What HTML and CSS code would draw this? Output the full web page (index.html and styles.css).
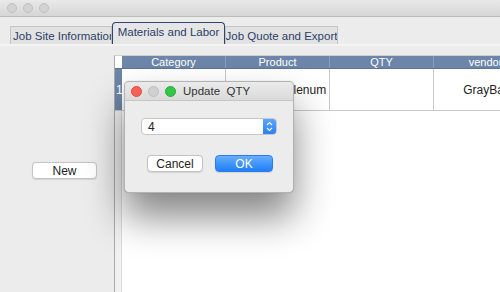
FILE: index.html
```html
<!DOCTYPE html>
<html lang="en">
<head>
  <meta charset="UTF-8" />
  <meta name="viewport" content="width=device-width, initial-scale=1.0" />
  <title>Materials and Labor</title>
  <link rel="stylesheet" href="styles.css">
</head>
<body>
  <div class="window">
    <div class="titlebar">
      <span class="light"></span>
      <span class="light"></span>
      <span class="light"></span>
    </div>

    <div class="tabs">
      <div class="tab tab-first">Job Site Information</div>
      <div class="tab active">Materials and Labor</div>
      <div class="tab">Job Quote and Export</div>
    </div>

    <div class="split">
      <div class="sidebar">
        <button class="btn">New</button>
      </div>
      <div class="pane">
        <div class="scroll">
          <table class="grid">
            <thead>
              <tr>
                <th class="corner"></th>
                <th class="col">Category</th>
                <th class="col">Product</th>
                <th class="col">QTY</th>
                <th class="col">vendor</th>
              </tr>
            </thead>
            <tbody>
              <tr>
                <td class="rownum">1</td>
                <td>Cable</td>
                <td>Cat6 Wire Plenum</td>
                <td></td>
                <td>GrayBar</td>
              </tr>
            </tbody>
          </table>
        </div>
      </div>
    </div>

    <!-- modal sheet -->
    <div class="dialog">
      <div class="dialog-title">
        <span class="light red"></span>
        <span class="light grey"></span>
        <span class="light green"></span>
        <span class="dialog-name">Update&nbsp; QTY</span>
      </div>
      <div class="dialog-body">
        <div class="spinner">
          <span class="spinner-value">4</span>
          <span class="stepper">
            <svg width="7" height="11" viewBox="0 0 7 11">
              <path d="M1 4 L3.5 1.5 L6 4 M1 7 L3.5 9.5 L6 7" fill="none" stroke="#fff" stroke-width="1.2"/>
            </svg>
          </span>
        </div>
        <div class="actions">
          <button class="btn btn-cancel">Cancel</button>
          <button class="btn btn-ok">OK</button>
        </div>
      </div>
    </div>
  </div>
</body>
</html>
```

FILE: styles.css
```css
body {
  margin: 0;
  font-family: 'Liberation Sans', Arial, sans-serif;
  font-size: 12px;
  color: #222;
  background: #ececec;
}
.window {
  position: relative;
  width: 500px;
  height: 292px;
  overflow: hidden;
  display: flex;
  flex-direction: column;
}
.titlebar {
  height: 16px;
  flex: none;
  display: flex;
  align-items: center;
  gap: 6px;
  padding-left: 7px;
  background: linear-gradient(#e9e9e9, #d6d6d6);
  border-bottom: 1px solid #bcbcbc;
}
.light {
  width: 10px;
  height: 10px;
  border-radius: 50%;
  background: #d3d3d3;
  border: 0.5px solid #c0c0c0;
  box-sizing: border-box;
}
.tabs {
  flex: none;
  display: flex;
  align-items: flex-end;
  padding: 5px 0 0 10px;
  height: 22px;
  border-bottom: 2px solid #f3f3f3;
}
.tab {
  height: 18px;
  width: 113px;
  box-sizing: border-box;
  display: flex;
  align-items: center;
  justify-content: center;
  background: #e2e2e2;
  border: 1px solid #c4c4c4;
  border-bottom: none;
  color: #2b3e68;
  font-size: 11.5px;
  white-space: nowrap;
  overflow: hidden;
  padding-top: 1px;
}
.tab-first {
  width: 102px;
  justify-content: flex-start;
  padding-left: 2px;
}
.tab.active {
  height: 22px;
  background: #e6e6e6;
  border: 1.5px solid #2c4670;
  border-bottom: none;
  border-radius: 4px 4px 0 0;
  align-items: flex-start;
  padding-top: 3px;
}
.split {
  flex: 1;
  display: flex;
}
.sidebar {
  width: 114px;
  flex: none;
  padding: 116px 0 0 32px;
  box-sizing: border-box;
}
.pane {
  flex: 1;
  padding-top: 9px;
  display: flex;
}
.scroll {
  flex: 1;
  border-left: 1px solid #a9a9a9;
  border-top: 1px solid #d0d0d0;
  background: linear-gradient(to right, #f1f1f1 6px, #dcdcdc 6px, #dcdcdc 7px, #fff 7px);
}
.grid {
  border-collapse: collapse;
  table-layout: fixed;
  width: 420px;
}
.grid th {
  height: 12px;
  padding: 0;
  background: #6c85a8;
  color: #fff;
  font-size: 11px;
  font-weight: normal;
  line-height: 12px;
  border-right: 1px solid #8b9db8;
  border-bottom: 1px solid #5d7396;
}
.grid th.corner {
  width: 7px;
  background: #fff;
  border-right: none;
}
.grid .col {
  width: 103px;
}
.grid td {
  height: 41px;
  padding: 0;
  background: #fff;
  text-align: center;
  border-right: 1px solid #c8c8c8;
  border-bottom: 1px solid #c8c8c8;
  white-space: nowrap;
  overflow: hidden;
}
.grid td.rownum {
  background: #6c85a8;
  color: #fff;
  text-align: left;
  padding-left: 1px;
  border-right: none;
}
.btn {
  font-family: inherit;
  font-size: 12px;
  color: #222;
  background: #fff;
  border: 1px solid #c3c3c3;
  border-radius: 4px;
  height: 17px;
  padding: 0;
  box-shadow: 0 0.5px 1px rgba(0, 0, 0, 0.1);
}
.sidebar .btn {
  width: 65px;
}
.dialog {
  position: absolute;
  left: 124px;
  top: 81px;
  width: 170px;
  height: 112px;
  box-sizing: border-box;
  background: #ececec;
  border: 1px solid #b3b3b3;
  border-radius: 5px;
  box-shadow: 0 24px 38px rgba(0, 0, 0, 0.48), 0 0 1px rgba(0, 0, 0, 0.3);
  overflow: hidden;
}
.dialog-title {
  height: 18px;
  display: flex;
  align-items: center;
  gap: 6px;
  padding-left: 6px;
  background: linear-gradient(#ebebeb, #dadada);
  border-bottom: 1px solid #c6c6c6;
}
.dialog-title .light {
  width: 11px;
  height: 11px;
}
.light.red {
  background: #fc5f57;
  border-color: #de4a42;
}
.light.grey {
  background: #d0d0d0;
  border-color: #bdbdbd;
}
.light.green {
  background: #33c748;
  border-color: #27a93a;
}
.dialog-name {
  margin-left: 1px;
  color: #333;
  font-size: 11.5px;
}
.dialog-body {
  padding: 17px 0 0 16px;
}
.spinner {
  width: 136px;
  height: 17px;
  box-sizing: border-box;
  display: flex;
  align-items: center;
  background: #fff;
  border: 1px solid #c6c6c6;
  border-radius: 4px;
  overflow: hidden;
}
.spinner-value {
  flex: 1;
  padding-left: 6px;
  font-size: 12px;
}
.stepper {
  width: 13px;
  height: 100%;
  display: flex;
  align-items: center;
  justify-content: center;
  background: linear-gradient(#5ba7fb, #2a7ff5);
}
.actions {
  display: flex;
  gap: 12px;
  padding: 20px 0 0 6px;
}
.btn-cancel {
  width: 56px;
}
.btn-ok {
  width: 58px;
  color: #fff;
  border-color: #2b7cf0;
  background: linear-gradient(#68aefc, #1f7ef8);
}
```
